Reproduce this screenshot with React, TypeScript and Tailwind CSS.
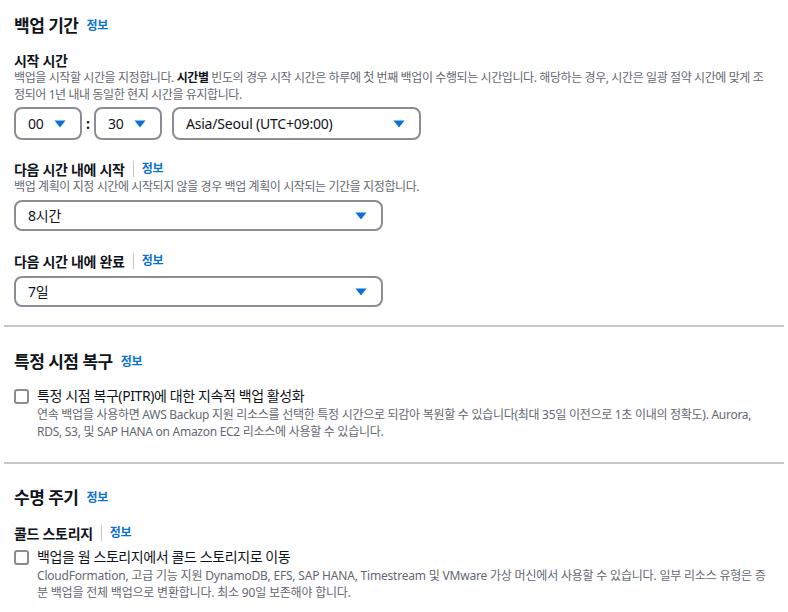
import React from 'react';

const font = { fontFamily: '"Noto Sans", "Noto Sans CJK KR", sans-serif' };

const Caret: React.FC = () => (
  <svg width="12" height="8" viewBox="0 0 12 8" className="shrink-0">
    <path d="M0.5 0.5 L11.5 0.5 L6 7.5 Z" fill="#0972d3" />
  </svg>
);

const Info: React.FC = () => <a className="text-[12px] font-bold tracking-[-0.3px] text-[#0972d3]">정보</a>;

const Select: React.FC<{ value: string; className?: string; height?: string }> = ({ value, className, height = 'h-[31px]' }) => (
  <div
    className={`flex items-center justify-between rounded-[8px] border-2 border-[#8c8c94] bg-white pl-[12px] pr-[14px] text-[14px] tracking-[-0.2px] text-[#0f141a] ${height} ${className ?? ''}`}
  >
    <span>{value}</span>
    <Caret />
  </div>
);

const FieldLabel: React.FC<{ label: string; info?: boolean }> = ({ label, info }) => (
  <div className="flex h-[18px] items-center text-[14px] font-bold tracking-[-0.3px] text-[#0f141a]">
    <span>{label}</span>
    {info && (
      <>
        <span className="mx-[8px] h-[16px] w-px bg-[#c6c6cd]" />
        <Info />
      </>
    )}
  </div>
);

const Heading: React.FC<{ title: string }> = ({ title }) => (
  <div className="flex h-[24px] items-center gap-[8px]">
    <h2 className="text-[17px] font-bold tracking-[-0.5px] text-[#0f141a]">{title}</h2>
    <Info />
  </div>
);

const Desc: React.FC<{ children: React.ReactNode; className?: string; tracking?: string }> = ({
  children,
  className,
  tracking = 'tracking-[-0.4px]',
}) => <p className={`text-[12px] leading-[17px] text-[#656871] ${tracking} ${className ?? ''}`}>{children}</p>;

const CheckRow: React.FC<{ label: string; desc: string; tracking?: string }> = ({ label, desc, tracking }) => (
  <div className="flex gap-[8px]">
    <div className="mt-[3px] h-[15px] w-[15px] shrink-0 rounded-[3px] border-2 border-[#8c8c94]" />
    <div>
      <div className="h-[20px] text-[14px] leading-[20px] tracking-[-0.4px] text-[#0f141a]">{label}</div>
      <Desc tracking={tracking}>{desc}</Desc>
    </div>
  </div>
);

export default function App() {
  return (
    <main className="min-h-screen w-[788px] bg-white px-[4px] pt-[14px]" style={font}>
      <section className="px-[10px]">
        <Heading title="백업 기간" />
        <div className="mt-[13px]">
          <FieldLabel label="시작 시간" />
          <Desc className="pr-[2px]">
            백업을 시작할 시간을 지정합니다. <b className="font-bold text-[#0f141a]">시간별</b> 빈도의 경우 시작 시간은 하루에 첫 번째 백업이 수행되는 시간입니다. 해당하는 경우, 시간은 일광 절약 시간에 맞게 조정되어 1년 내내 동일한 현지 시간을 유지합니다.
          </Desc>
          <div className="mt-[4px] flex items-center">
            <Select value="00" className="w-[68px]" height="h-[33px]" />
            <span className="mx-[4px] text-[14px] font-bold text-[#0f141a]">:</span>
            <Select value="30" className="w-[68px]" height="h-[33px]" />
            <Select value="Asia/Seoul (UTC+09:00)" className="ml-[10px] w-[249px]" height="h-[33px]" />
          </div>
        </div>
        <div className="mt-[20px]">
          <FieldLabel label="다음 시간 내에 시작" info />
          <Desc>백업 계획이 지정 시간에 시작되지 않을 경우 백업 계획이 시작되는 기간을 지정합니다.</Desc>
          <Select value="8시간" className="mt-[5px] w-[369px]" />
        </div>
        <div className="mt-[21px]">
          <FieldLabel label="다음 시간 내에 완료" info />
          <Select value="7일" className="mt-[6px] w-[369px]" />
        </div>
      </section>

      <hr className="mt-[18px] border-t-2 border-[#c6c6cd]" />

      <section className="px-[10px] pt-[23px]">
        <Heading title="특정 시점 복구" />
        <div className="mt-[12px]">
          <CheckRow
            label="특정 시점 복구(PITR)에 대한 지속적 백업 활성화"
            tracking="tracking-[-0.28px]"
            desc="연속 백업을 사용하면 AWS Backup 지원 리소스를 선택한 특정 시간으로 되감아 복원할 수 있습니다(최대 35일 이전으로 1초 이내의 정확도). Aurora, RDS, S3, 및 SAP HANA on Amazon EC2 리소스에 사용할 수 있습니다."
          />
        </div>
      </section>

      <hr className="mt-[22px] border-t-2 border-[#c6c6cd]" />

      <section className="px-[10px] pt-[22px]">
        <Heading title="수명 주기" />
        <div className="mt-[14px]">
          <FieldLabel label="콜드 스토리지" info />
        </div>
        <div className="mt-[5px]">
          <CheckRow
            label="백업을 웜 스토리지에서 콜드 스토리지로 이동"
            tracking="tracking-[-0.2px]"
            desc="CloudFormation, 고급 기능 지원 DynamoDB, EFS, SAP HANA, Timestream 및 VMware 가상 머신에서 사용할 수 있습니다. 일부 리소스 유형은 증분 백업을 전체 백업으로 변환합니다. 최소 90일 보존해야 합니다."
          />
        </div>
      </section>
    </main>
  );
}
